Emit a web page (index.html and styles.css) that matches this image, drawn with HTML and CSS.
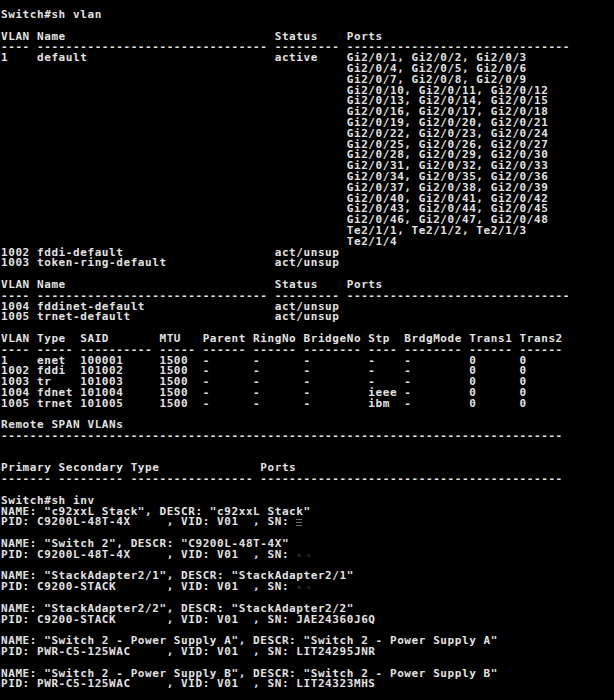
FILE: index.html
```
<!DOCTYPE html>
<html lang="en">
<head>
<meta charset="utf-8">
<title>Switch console</title>
<link rel="stylesheet" href="styles.css">
</head>
<body>
<pre class="console">Switch#sh vlan

VLAN Name                             Status    Ports
---- -------------------------------- --------- -------------------------------
1    default                          active    Gi2/0/1, Gi2/0/2, Gi2/0/3
                                                Gi2/0/4, Gi2/0/5, Gi2/0/6
                                                Gi2/0/7, Gi2/0/8, Gi2/0/9
                                                Gi2/0/10, Gi2/0/11, Gi2/0/12
                                                Gi2/0/13, Gi2/0/14, Gi2/0/15
                                                Gi2/0/16, Gi2/0/17, Gi2/0/18
                                                Gi2/0/19, Gi2/0/20, Gi2/0/21
                                                Gi2/0/22, Gi2/0/23, Gi2/0/24
                                                Gi2/0/25, Gi2/0/26, Gi2/0/27
                                                Gi2/0/28, Gi2/0/29, Gi2/0/30
                                                Gi2/0/31, Gi2/0/32, Gi2/0/33
                                                Gi2/0/34, Gi2/0/35, Gi2/0/36
                                                Gi2/0/37, Gi2/0/38, Gi2/0/39
                                                Gi2/0/40, Gi2/0/41, Gi2/0/42
                                                Gi2/0/43, Gi2/0/44, Gi2/0/45
                                                Gi2/0/46, Gi2/0/47, Gi2/0/48
                                                Te2/1/1, Te2/1/2, Te2/1/3
                                                Te2/1/4
1002 fddi-default                     act/unsup
1003 token-ring-default               act/unsup

VLAN Name                             Status    Ports
---- -------------------------------- --------- -------------------------------
1004 fddinet-default                  act/unsup
1005 trnet-default                    act/unsup

VLAN Type  SAID       MTU   Parent RingNo BridgeNo Stp  BrdgMode Trans1 Trans2
---- ----- ---------- ----- ------ ------ -------- ---- -------- ------ ------
1    enet  100001     1500  -      -      -        -    -        0      0
1002 fddi  101002     1500  -      -      -        -    -        0      0
1003 tr    101003     1500  -      -      -        -    -        0      0
1004 fdnet 101004     1500  -      -      -        ieee -        0      0
1005 trnet 101005     1500  -      -      -        ibm  -        0      0

Remote SPAN VLANs
------------------------------------------------------------------------------


Primary Secondary Type              Ports
------- --------- ----------------- ------------------------------------------

Switch#sh inv
NAME: "c92xxL Stack", DESCR: "c92xxL Stack"
PID: C9200L-48T-4X     , VID: V01  , SN: <span class="smudge"></span>

NAME: "Switch 2", DESCR: "C9200L-48T-4X"
PID: C9200L-48T-4X     , VID: V01  , SN: <span class="smudge faint"></span>

NAME: "StackAdapter2/1", DESCR: "StackAdapter2/1"
PID: C9200-STACK       , VID: V01  , SN: <span class="smudge faint"></span>

NAME: "StackAdapter2/2", DESCR: "StackAdapter2/2"
PID: C9200-STACK       , VID: V01  , SN: JAE24360J6Q

NAME: "Switch 2 - Power Supply A", DESCR: "Switch 2 - Power Supply A"
PID: PWR-C5-125WAC     , VID: V01  , SN: LIT24295JNR

NAME: "Switch 2 - Power Supply B", DESCR: "Switch 2 - Power Supply B"
PID: PWR-C5-125WAC     , VID: V01  , SN: LIT24323MHS
</pre>
</body>
</html>
```
FILE: styles.css
```
html, body {
  margin: 0;
  padding: 0;
  background: #000;
  height: 100%;
  overflow: hidden;
}

.console {
  margin: 0;
  padding: 10px 0 0 1px;
  font-family: "DejaVu Sans Mono", "Liberation Mono", monospace;
  font-weight: bold;
  font-size: 11px;
  letter-spacing: 0.58px;
  line-height: 10.8px;
  color: #e2e2e2;
  white-space: pre;
}

.smudge {
  display: inline-block;
  width: 6px;
  height: 7px;
  vertical-align: -1px;
  background: repeating-linear-gradient(0deg, #8a8a8a 0 1px, #000 1px 3px);
  opacity: 0.8;
}

.smudge.faint {
  width: 16px;
  background: radial-gradient(circle at 20% 50%, #3a3a3a 0 1px, transparent 2px),
              radial-gradient(circle at 80% 50%, #2a2a2a 0 1px, transparent 2px);
}
```
